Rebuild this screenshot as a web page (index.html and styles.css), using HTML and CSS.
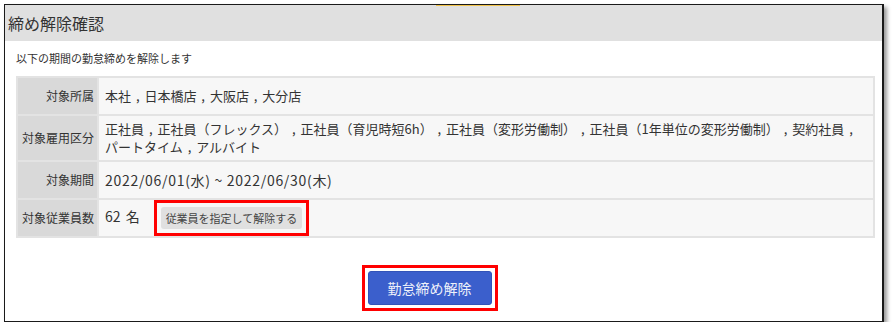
FILE: index.html
```html
<!DOCTYPE html>
<html lang="ja">
<head>
  <meta charset="UTF-8" />
  <meta name="viewport" content="width=device-width, initial-scale=1" />
  <title>締め解除確認</title>
  <link rel="stylesheet" href="styles.css">
</head>
<body>
  <div class="dialog">
    <div class="dialog-header">締め解除確認</div>

    <div class="dialog-body">
      <p class="lead">以下の期間の勤怠締めを解除します</p>

      <table class="info">
        <tr>
          <th>対象所属</th>
          <td>本社 , 日本橋店 , 大阪店 , 大分店</td>
        </tr>
        <tr>
          <th>対象雇用区分</th>
          <td>
            <span class="item">正社員 ,</span>
            <span class="item">正社員（フレックス） ,</span>
            <span class="item">正社員（育児時短6h） ,</span>
            <span class="item">正社員（変形労働制） ,</span>
            <span class="item">正社員（1年単位の変形労働制） ,</span>
            <span class="item">契約社員 ,</span>
            <span class="item">パートタイム ,</span>
            <span class="item">アルバイト</span>
          </td>
        </tr>
        <tr>
          <th>対象期間</th>
          <td class="period">2022/06/01(水) ~ 2022/06/30(木)</td>
        </tr>
        <tr>
          <th>対象従業員数</th>
          <td>
            <span class="count">62 名</span>
            <span class="mark mark-sub"><button class="btn-sub">従業員を指定して解除する</button></span>
          </td>
        </tr>
      </table>

      <div class="actions">
        <span class="mark mark-main"><button class="btn-main">勤怠締め解除</button></span>
      </div>
    </div>
  </div>
</body>
</html>
```

FILE: styles.css
```css
body {
  margin: 0;
  background: #ffffff;
  font-family: 'Noto Sans CJK JP', 'Noto Sans', sans-serif;
  color: #333333;
}

.dialog {
  width: 880px;
  margin: 4px 0 0 4px;
  box-sizing: border-box;
  border: 1px solid #1a1a1a;
  border-right-width: 2px;
  background: #ffffff;
  box-shadow: 3px 3px 4px rgba(0, 0, 0, 0.4);
}

.dialog-header {
  position: relative;
  height: 36px;
  line-height: 36px;
  padding-left: 3px;
  font-size: 16px;
  background: #e0e0e0;
}

/* ちいさいタブの目印 */
.dialog-header::before {
  content: "";
  position: absolute;
  top: 0;
  left: 431px;
  width: 84px;
  height: 1px;
  background: #f0c24a;
}

.dialog-body {
  padding: 10px 7px 16px 11px;
}

.lead {
  margin: 0 0 11px;
  font-size: 11px;
  line-height: 14px;
}

.info {
  width: 100%;
  border-collapse: collapse;
}

.info th,
.info td {
  border: 2px solid #e3e3e3;
  height: 28px;
  padding: 4px 6px;
  font-size: 13px;
  line-height: 18px;
  word-spacing: 2px;
  text-align: left;
  font-weight: normal;
  background: #f7f7f7;
}

.info th {
  width: 1px;
  white-space: nowrap;
  padding: 4px 3px 4px 4px;
  font-size: 12px;
  word-spacing: 0;
  text-align: right;
  background: #d9d9d9;
}

.info td.period {
  font-size: 14px;
  letter-spacing: 0.7px;
  word-spacing: 0;
}

.item {
  white-space: nowrap;
}

.count {
  font-size: 14px;
  margin-right: 16px;
}

.mark {
  display: inline-block;
  line-height: 0;
  outline: 3px solid #ff0000;
  vertical-align: middle;
}

.mark-sub {
  outline-offset: 4px;
}

.mark-main {
  outline-offset: 3px;
}

button {
  font-family: inherit;
  cursor: pointer;
}

.btn-sub {
  height: 22px;
  padding: 0 5px;
  font-size: 11px;
  word-spacing: 0;
  color: #444444;
  background: #e0e0e0;
  border: none;
  border-radius: 3px;
}

.actions {
  display: flex;
  justify-content: center;
  padding: 33px 32px 0 0;
}

.btn-main {
  width: 124px;
  height: 34px;
  font-size: 14px;
  color: #eef1fa;
  background: #3b5fcc;
  border: 1px solid #3253b8;
  border-radius: 3px;
}
```
